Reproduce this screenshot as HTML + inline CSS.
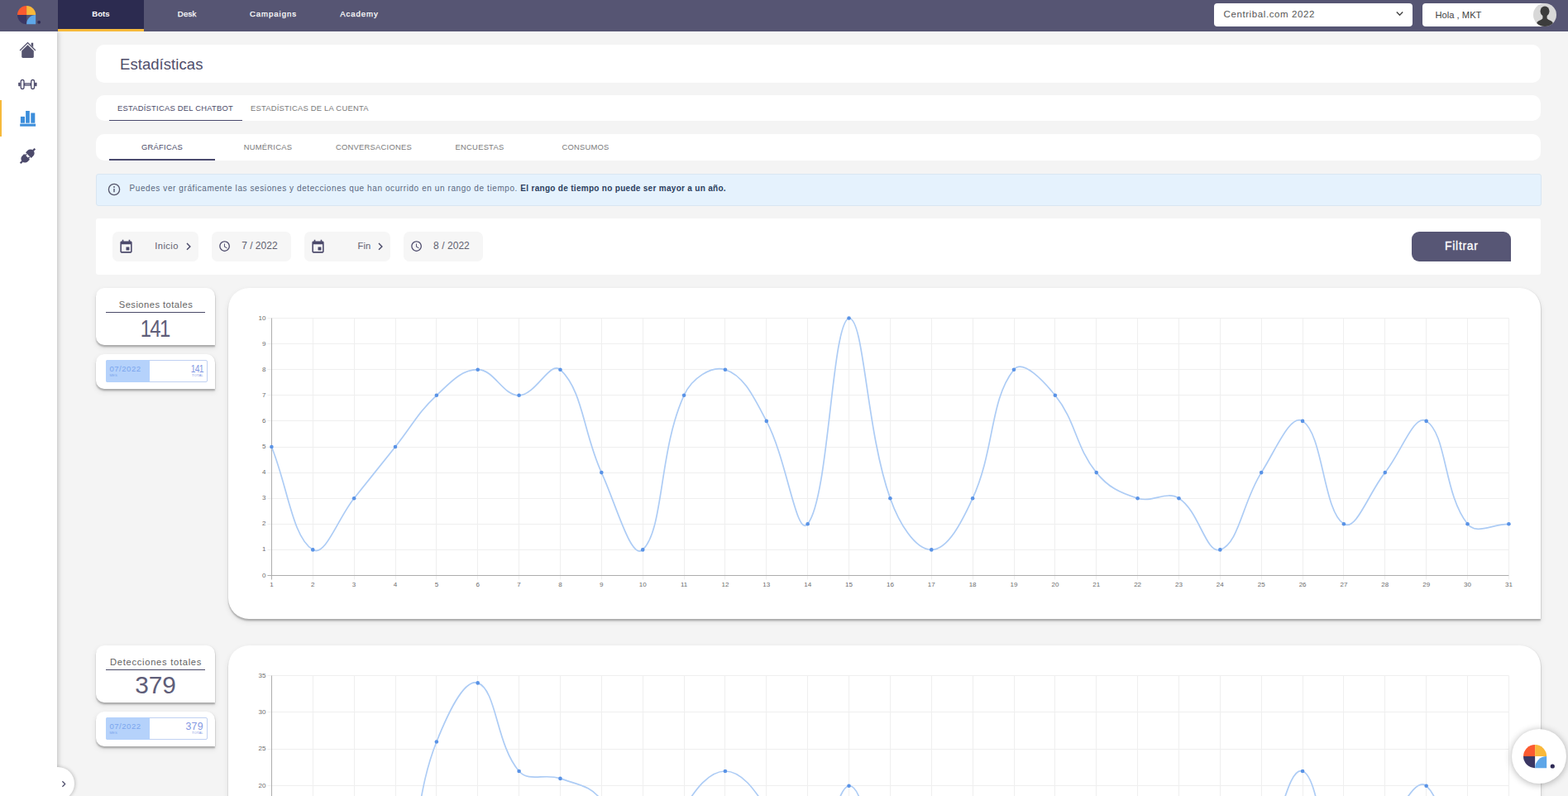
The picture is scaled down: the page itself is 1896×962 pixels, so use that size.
<!DOCTYPE html>
<html lang="es">
<head>
<meta charset="utf-8">
<title>Estadísticas</title>
<style>
*{box-sizing:border-box;margin:0;padding:0}
html,body{width:1896px;height:962px;overflow:hidden;background:#f4f4f4;font-family:"Liberation Sans",sans-serif;color:#4a4a68}
.abs{position:absolute}
#nav{position:absolute;left:0;top:0;width:1896px;height:38px;background:#565573}
#nav .on{position:absolute;left:70px;top:0;width:104px;height:38px;background:#2c2b50;border-bottom:3px solid #f6b93b}
#side{position:absolute;left:0;top:38px;width:69.3px;height:924px;background:#fff;box-shadow:1px 0 6px rgba(0,0,0,0.24)}
.card{position:absolute;background:#fff}
.t{position:absolute;white-space:nowrap;line-height:1}
.c{text-align:center}
.sel{position:absolute;top:4px;height:28px;background:#fff;border-radius:4px}
.fb{position:absolute;top:280px;height:36px;background:#f6f6f6;border-radius:7px}
.sh{box-shadow:0 2px 1.5px rgba(0,0,0,.16),0 3px 2px rgba(0,0,0,.1),0 3px 6px 1px rgba(0,0,0,.07),1px 0 1px rgba(0,0,0,.05)}
.up{font-size:9.4px;letter-spacing:0.24px}
.dim{color:#7a7a7a}
.ic{position:absolute;fill:#4c4a6b}
.nv{-webkit-text-stroke:0.25px #fff}
</style>
</head>
<body>
<!-- main cards -->
<div class="card" style="left:116px;top:54px;width:1747px;height:46px;border-radius:10px"></div>
<div class="t" style="left:145px;top:68.8px;font-size:18.5px;letter-spacing:0.06px;color:#4f4e6b">Estadísticas</div>

<div class="card" style="left:116px;top:115px;width:1747px;height:31px;border-radius:10px"></div>
<div class="abs" style="left:132px;top:144.5px;width:161px;height:1.5px;background:#4a4a6e"></div>
<div class="t up" style="left:142px;top:126px;color:#4a4a68">ESTADÍSTICAS DEL CHATBOT</div>
<div class="t up dim" style="left:303px;top:126px">ESTADÍSTICAS DE LA CUENTA</div>

<div class="card" style="left:116px;top:161.5px;width:1747px;height:32.5px;border-radius:10px"></div>
<div class="abs" style="left:132px;top:191.5px;width:128px;height:2.5px;background:#4a4a6e"></div>
<div class="t up c" style="left:132px;top:172.9px;width:128px;color:#4a4a68">GRÁFICAS</div>
<div class="t up c dim" style="left:260px;top:172.9px;width:128px">NUMÉRICAS</div>
<div class="t up c dim" style="left:388px;top:172.9px;width:128px">CONVERSACIONES</div>
<div class="t up c dim" style="left:516px;top:172.9px;width:128px">ENCUESTAS</div>
<div class="t up c dim" style="left:644px;top:172.9px;width:128px">CONSUMOS</div>

<!-- info banner -->
<div class="abs" style="left:116px;top:209.5px;width:1747.5px;height:39px;background:#e5f2fd;border:1px solid #d9e6f2;border-radius:3px"></div>
<svg class="abs" style="left:130px;top:221px" width="16" height="16" viewBox="0 0 16 16"><circle cx="8" cy="8" r="6.6" fill="none" stroke="#55556a" stroke-width="1.3"/><rect x="7.3" y="7" width="1.4" height="4.2" fill="#55556a"/><circle cx="8" cy="5" r="0.9" fill="#55556a"/></svg>
<div class="t" style="left:156.5px;top:223.4px;font-size:10px;letter-spacing:0.59px;color:#5a6880">Puedes ver gráficamente las sesiones y detecciones que han ocurrido en un rango de tiempo. <b style="color:#2c3e5e;letter-spacing:0.3px">El rango de tiempo no puede ser mayor a un año.</b></div>

<!-- filter card -->
<div class="card" style="left:116px;top:264px;width:1747px;height:68px;border-radius:3px"></div>
<div class="fb" style="left:136px;width:104px"></div>
<div class="fb" style="left:256px;width:96px"></div>
<div class="fb" style="left:368px;width:104px"></div>
<div class="fb" style="left:488px;width:96px"></div>
<svg class="ic" style="left:142.5px;top:289.2px" width="19" height="19" viewBox="0 0 24 24"><path d="M17 12h-5v5h5v-5zM16 1v2H8V1H6v2H5c-1.11 0-1.99.9-1.99 2L3 19c0 1.1.89 2 2 2h14c1.1 0 2-.9 2-2V5c0-1.1-.9-2-2-2h-1V1h-2zm3 18H5V8h14v11z"/></svg>
<svg class="ic" style="left:374.7px;top:289.2px" width="19" height="19" viewBox="0 0 24 24"><path d="M17 12h-5v5h5v-5zM16 1v2H8V1H6v2H5c-1.11 0-1.99.9-1.99 2L3 19c0 1.1.89 2 2 2h14c1.1 0 2-.9 2-2V5c0-1.1-.9-2-2-2h-1V1h-2zm3 18H5V8h14v11z"/></svg>
<svg class="ic" style="left:264px;top:290.4px" width="15.2" height="15.2" viewBox="0 0 24 24"><path d="M11.99 2C6.47 2 2 6.48 2 12s4.47 10 9.99 10C17.52 22 22 17.52 22 12S17.52 2 11.99 2zM12 20c-4.42 0-8-3.580-8-8s3.580-8 8-8 8 3.580 8 8-3.580 8-8 8zm.5-13H11v6l5.250 3.150.75-1.230-4.500-2.670z"/></svg>
<svg class="ic" style="left:496.1px;top:290.4px" width="15.2" height="15.2" viewBox="0 0 24 24"><path d="M11.99 2C6.47 2 2 6.48 2 12s4.47 10 9.99 10C17.52 22 22 17.520 22 12S17.520 2 11.990 2zM12 20c-4.42 0-8-3.580-8-8s3.580-8 8-8 8 3.580 8 8-3.580 8-8 8zm.5-13H11v6l5.250 3.150.75-1.230-4.500-2.670z"/></svg>
<svg class="abs" style="left:224px;top:292px" width="8" height="12" viewBox="0 0 8 12"><path d="M2 2L5.900 5.900 2 9.800" fill="none" stroke="#4a4a68" stroke-width="1.4"/></svg>
<svg class="abs" style="left:456px;top:292px" width="8" height="12" viewBox="0 0 8 12"><path d="M2 2L5.900 5.900 2 9.800" fill="none" stroke="#4a4a68" stroke-width="1.4"/></svg>
<div class="t" style="left:187.3px;top:291.5px;font-size:11.2px;letter-spacing:0.39px;color:#60606f">Inicio</div>
<div class="t" style="left:292.2px;top:291.1px;font-size:12px;color:#60606f">7 / 2022</div>
<div class="t" style="left:432.6px;top:291.5px;font-size:11.2px;color:#60606f">Fin</div>
<div class="t" style="left:524px;top:291.1px;font-size:12px;letter-spacing:0.06px;color:#60606f">8 / 2022</div>
<div class="abs" style="left:1707px;top:280px;width:120px;height:36px;background:#575675;border-radius:9px 9px 0 9px"></div>
<div class="t c" style="left:1707px;top:290.3px;width:120px;font-size:14px;letter-spacing:0.67px;text-indent:0.67px;color:#fff;-webkit-text-stroke:0.3px #fff">Filtrar</div>

<!-- stat cards -->
<div class="card sh" style="left:116px;top:348px;width:144px;height:69px;border-radius:10px 10px 0 10px"></div>
<div class="t c" style="left:116px;top:362.5px;width:145px;font-size:11.2px;letter-spacing:0.46px;color:#626262">Sesiones totales</div>
<div class="abs" style="left:128px;top:377px;width:120px;height:1px;background:#4a4a68"></div>
<div class="t c" style="left:116px;top:381.6px;width:144px;font-size:29.8px;color:#5f5e79;transform:scaleX(0.8);letter-spacing:-2px;text-indent:-2px" id="n141">141</div>
<div class="card sh" style="left:116px;top:427.5px;width:144px;height:42px;border-radius:10px 10px 0 10px"></div>
<div class="abs" style="left:128px;top:435px;width:123px;height:27px;border:1px solid #c0d1f2;background:#fff;border-radius:2px"></div>
<div class="abs" style="left:128px;top:435px;width:53px;height:27px;background:#b5d2fb;border-radius:2px 0 0 2px"></div>
<div class="t" style="left:132.4px;top:441.1px;font-size:9.6px;letter-spacing:0.5px;color:#7ba6ee">07/2022</div>
<div class="t" style="left:132.6px;top:451.7px;font-size:4.2px;color:#7ba6ee">MES</div>
<div class="t" style="right:1650.2px;top:439.8px;font-size:12.3px;color:#8398e2;letter-spacing:-0.9px;transform:scaleX(0.84);transform-origin:100% 50%" id="s141">141</div>
<div class="t" style="right:1650.3px;top:451.7px;font-size:4.2px;letter-spacing:0.1px;color:#8398e2">TOTAL</div>

<div class="card sh" style="left:116px;top:780px;width:144px;height:69px;border-radius:10px 10px 0 10px"></div>
<div class="t c" style="left:116px;top:794.5px;width:145px;font-size:11.2px;letter-spacing:0.71px;color:#626262">Detecciones totales</div>
<div class="abs" style="left:128px;top:809px;width:120px;height:1px;background:#4a4a68"></div>
<div class="t c" style="left:116px;top:813.4px;width:144px;font-size:29.8px;color:#5f5e79">379</div>
<div class="card sh" style="left:116px;top:859.5px;width:144px;height:42px;border-radius:10px 10px 0 10px"></div>
<div class="abs" style="left:128px;top:867px;width:123px;height:27px;border:1px solid #c0d1f2;background:#fff;border-radius:2px"></div>
<div class="abs" style="left:128px;top:867px;width:53px;height:27px;background:#b5d2fb;border-radius:2px 0 0 2px"></div>
<div class="t" style="left:132.4px;top:873.1px;font-size:9.6px;letter-spacing:0.5px;color:#7ba6ee">07/2022</div>
<div class="t" style="left:132.6px;top:883.7px;font-size:4.2px;color:#7ba6ee">MES</div>
<div class="t" style="right:1650.2px;top:871.8px;font-size:12.3px;letter-spacing:0.3px;color:#8398e2">379</div>
<div class="t" style="right:1650.3px;top:883.7px;font-size:4.2px;letter-spacing:0.1px;color:#8398e2">TOTAL</div>

<!-- chart cards -->
<div class="card sh" style="left:276px;top:348px;width:1587px;height:400px;border-radius:25px 25px 0 25px"></div>
<div class="card sh" style="left:276px;top:780px;width:1587px;height:400px;border-radius:25px 25px 0 25px"></div>
<svg class="abs" style="left:0;top:0" width="1896" height="962" viewBox="0 0 1896 962">
<path d="M378.5 384.5V700.5M428.5 384.5V700.5M478.5 384.5V700.5M527.5 384.5V700.5M577.5 384.5V700.5M627.5 384.5V700.5M677.5 384.5V700.5M727.5 384.5V700.5M777.5 384.5V700.5M827.5 384.5V700.5M876.5 384.5V700.5M926.5 384.5V700.5M976.5 384.5V700.5M1026.5 384.5V700.5M1076.5 384.5V700.5M1126.5 384.5V700.5M1176.5 384.5V700.5M1226.5 384.5V700.5M1275.5 384.5V700.5M1325.5 384.5V700.5M1375.5 384.5V700.5M1425.5 384.5V700.5M1475.5 384.5V700.5M1525.5 384.5V700.5M1575.5 384.5V700.5M1624.5 384.5V700.5M1674.5 384.5V700.5M1724.5 384.5V700.5M1774.5 384.5V700.5M1824.5 384.5V700.5M323.4 664.5H1824.4M323.4 633.5H1824.4M323.4 602.5H1824.4M323.4 571.5H1824.4M323.4 540.5H1824.4M323.4 508.5H1824.4M323.4 477.5H1824.4M323.4 446.5H1824.4M323.4 415.5H1824.4M323.4 384.5H1824.4" stroke="#efefef" stroke-width="1" fill="none"/>
<path d="M328.5 384.5V700.5M323.4 695.5H1824.4" stroke="#adadad" stroke-width="1" fill="none"/>
<g font-family="Liberation Sans, sans-serif" font-size="8" fill="#6c6c6c"><text x="321.4" y="697.5" text-anchor="end">0</text><text x="321.4" y="666.4" text-anchor="end">1</text><text x="321.4" y="635.3" text-anchor="end">2</text><text x="321.4" y="604.2" text-anchor="end">3</text><text x="321.4" y="573.1" text-anchor="end">4</text><text x="321.4" y="542.0" text-anchor="end">5</text><text x="321.4" y="510.9" text-anchor="end">6</text><text x="321.4" y="479.8" text-anchor="end">7</text><text x="321.4" y="448.7" text-anchor="end">8</text><text x="321.4" y="417.6" text-anchor="end">9</text><text x="321.4" y="386.5" text-anchor="end">10</text><text x="328.4" y="709.0" text-anchor="middle">1</text><text x="378.3" y="709.0" text-anchor="middle">2</text><text x="428.1" y="709.0" text-anchor="middle">3</text><text x="478.0" y="709.0" text-anchor="middle">4</text><text x="527.9" y="709.0" text-anchor="middle">5</text><text x="577.7" y="709.0" text-anchor="middle">6</text><text x="627.6" y="709.0" text-anchor="middle">7</text><text x="677.5" y="709.0" text-anchor="middle">8</text><text x="727.3" y="709.0" text-anchor="middle">9</text><text x="777.2" y="709.0" text-anchor="middle">10</text><text x="827.1" y="709.0" text-anchor="middle">11</text><text x="876.9" y="709.0" text-anchor="middle">12</text><text x="926.8" y="709.0" text-anchor="middle">13</text><text x="976.7" y="709.0" text-anchor="middle">14</text><text x="1026.5" y="709.0" text-anchor="middle">15</text><text x="1076.4" y="709.0" text-anchor="middle">16</text><text x="1126.3" y="709.0" text-anchor="middle">17</text><text x="1176.1" y="709.0" text-anchor="middle">18</text><text x="1226.0" y="709.0" text-anchor="middle">19</text><text x="1275.9" y="709.0" text-anchor="middle">20</text><text x="1325.7" y="709.0" text-anchor="middle">21</text><text x="1375.6" y="709.0" text-anchor="middle">22</text><text x="1425.5" y="709.0" text-anchor="middle">23</text><text x="1475.3" y="709.0" text-anchor="middle">24</text><text x="1525.2" y="709.0" text-anchor="middle">25</text><text x="1575.1" y="709.0" text-anchor="middle">26</text><text x="1624.9" y="709.0" text-anchor="middle">27</text><text x="1674.8" y="709.0" text-anchor="middle">28</text><text x="1724.7" y="709.0" text-anchor="middle">29</text><text x="1774.5" y="709.0" text-anchor="middle">30</text><text x="1824.4" y="709.0" text-anchor="middle">31</text></g>
<path d="M328.40 540.00C348.35 589.76 353.25 648.80 378.27 664.40C393.15 673.68 408.19 627.08 428.13 602.20C448.08 577.32 458.05 564.88 478.00 540.00C497.95 515.12 504.90 499.28 527.87 477.80C544.80 461.96 557.79 446.70 577.73 446.70C597.68 446.70 607.65 477.80 627.60 477.80C647.55 477.80 665.31 435.32 677.47 446.70C705.20 472.64 705.04 522.43 727.33 571.10C744.93 609.51 763.08 677.61 777.20 664.40C802.98 640.29 796.48 544.57 827.07 477.80C836.37 457.49 860.00 441.42 876.93 446.70C899.90 453.86 911.92 481.06 926.80 508.90C951.81 555.70 962.88 650.50 976.67 633.30C1002.77 600.74 1005.32 391.12 1026.53 384.50C1045.21 384.50 1047.00 519.69 1076.40 602.20C1086.89 631.65 1106.32 664.40 1126.27 664.40C1146.21 664.40 1163.05 630.77 1176.13 602.20C1202.94 543.69 1196.66 483.29 1226.00 446.70C1236.56 433.53 1261.62 460.03 1275.87 477.80C1301.51 509.79 1300.09 539.11 1325.73 571.10C1339.98 588.87 1354.02 595.47 1375.60 602.20C1393.91 607.91 1410.12 592.63 1425.47 602.20C1450.01 617.51 1458.19 669.75 1475.33 664.40C1498.08 657.31 1502.45 606.57 1525.20 571.10C1542.34 544.37 1560.19 499.62 1575.07 508.90C1600.08 524.50 1599.92 617.70 1624.93 633.30C1639.81 642.58 1654.85 595.98 1674.80 571.10C1694.75 546.22 1709.79 499.62 1724.67 508.90C1749.68 524.50 1745.46 597.03 1774.53 633.30C1785.35 646.79 1804.45 633.30 1824.40 633.30" stroke="#adccf5" stroke-width="1.7" fill="none" stroke-linecap="butt"/>
<g fill="#5a93e6"><circle cx="328.40" cy="540.00" r="2.3"/><circle cx="378.27" cy="664.40" r="2.3"/><circle cx="428.13" cy="602.20" r="2.3"/><circle cx="478.00" cy="540.00" r="2.3"/><circle cx="527.87" cy="477.80" r="2.3"/><circle cx="577.73" cy="446.70" r="2.3"/><circle cx="627.60" cy="477.80" r="2.3"/><circle cx="677.47" cy="446.70" r="2.3"/><circle cx="727.33" cy="571.10" r="2.3"/><circle cx="777.20" cy="664.40" r="2.3"/><circle cx="827.07" cy="477.80" r="2.3"/><circle cx="876.93" cy="446.70" r="2.3"/><circle cx="926.80" cy="508.90" r="2.3"/><circle cx="976.67" cy="633.30" r="2.3"/><circle cx="1026.53" cy="384.50" r="2.3"/><circle cx="1076.40" cy="602.20" r="2.3"/><circle cx="1126.27" cy="664.40" r="2.3"/><circle cx="1176.13" cy="602.20" r="2.3"/><circle cx="1226.00" cy="446.70" r="2.3"/><circle cx="1275.87" cy="477.80" r="2.3"/><circle cx="1325.73" cy="571.10" r="2.3"/><circle cx="1375.60" cy="602.20" r="2.3"/><circle cx="1425.47" cy="602.20" r="2.3"/><circle cx="1475.33" cy="664.40" r="2.3"/><circle cx="1525.20" cy="571.10" r="2.3"/><circle cx="1575.07" cy="508.90" r="2.3"/><circle cx="1624.93" cy="633.30" r="2.3"/><circle cx="1674.80" cy="571.10" r="2.3"/><circle cx="1724.67" cy="508.90" r="2.3"/><circle cx="1774.53" cy="633.30" r="2.3"/><circle cx="1824.40" cy="633.30" r="2.3"/></g>
<path d="M378.5 816.5V1132.5M428.5 816.5V1132.5M478.5 816.5V1132.5M527.5 816.5V1132.5M577.5 816.5V1132.5M627.5 816.5V1132.5M677.5 816.5V1132.5M727.5 816.5V1132.5M777.5 816.5V1132.5M827.5 816.5V1132.5M876.5 816.5V1132.5M926.5 816.5V1132.5M976.5 816.5V1132.5M1026.5 816.5V1132.5M1076.5 816.5V1132.5M1126.5 816.5V1132.5M1176.5 816.5V1132.5M1226.5 816.5V1132.5M1275.5 816.5V1132.5M1325.5 816.5V1132.5M1375.5 816.5V1132.5M1425.5 816.5V1132.5M1475.5 816.5V1132.5M1525.5 816.5V1132.5M1575.5 816.5V1132.5M1624.5 816.5V1132.5M1674.5 816.5V1132.5M1724.5 816.5V1132.5M1774.5 816.5V1132.5M1824.5 816.5V1132.5M323.4 1083.5H1824.4M323.4 1038.5H1824.4M323.4 994.5H1824.4M323.4 949.5H1824.4M323.4 905.5H1824.4M323.4 860.5H1824.4M323.4 816.5H1824.4" stroke="#efefef" stroke-width="1" fill="none"/>
<path d="M328.5 816.5V1132.5M323.4 1127.5H1824.4" stroke="#adadad" stroke-width="1" fill="none"/>
<g font-family="Liberation Sans, sans-serif" font-size="8" fill="#6c6c6c"><text x="321.4" y="1129.5" text-anchor="end">0</text><text x="321.4" y="1085.1" text-anchor="end">5</text><text x="321.4" y="1040.6" text-anchor="end">10</text><text x="321.4" y="996.2" text-anchor="end">15</text><text x="321.4" y="951.8" text-anchor="end">20</text><text x="321.4" y="907.4" text-anchor="end">25</text><text x="321.4" y="862.9" text-anchor="end">30</text><text x="321.4" y="818.5" text-anchor="end">35</text><text x="328.4" y="1141.0" text-anchor="middle">1</text><text x="378.3" y="1141.0" text-anchor="middle">2</text><text x="428.1" y="1141.0" text-anchor="middle">3</text><text x="478.0" y="1141.0" text-anchor="middle">4</text><text x="527.9" y="1141.0" text-anchor="middle">5</text><text x="577.7" y="1141.0" text-anchor="middle">6</text><text x="627.6" y="1141.0" text-anchor="middle">7</text><text x="677.5" y="1141.0" text-anchor="middle">8</text><text x="727.3" y="1141.0" text-anchor="middle">9</text><text x="777.2" y="1141.0" text-anchor="middle">10</text><text x="827.1" y="1141.0" text-anchor="middle">11</text><text x="876.9" y="1141.0" text-anchor="middle">12</text><text x="926.8" y="1141.0" text-anchor="middle">13</text><text x="976.7" y="1141.0" text-anchor="middle">14</text><text x="1026.5" y="1141.0" text-anchor="middle">15</text><text x="1076.4" y="1141.0" text-anchor="middle">16</text><text x="1126.3" y="1141.0" text-anchor="middle">17</text><text x="1176.1" y="1141.0" text-anchor="middle">18</text><text x="1226.0" y="1141.0" text-anchor="middle">19</text><text x="1275.9" y="1141.0" text-anchor="middle">20</text><text x="1325.7" y="1141.0" text-anchor="middle">21</text><text x="1375.6" y="1141.0" text-anchor="middle">22</text><text x="1425.5" y="1141.0" text-anchor="middle">23</text><text x="1475.3" y="1141.0" text-anchor="middle">24</text><text x="1525.2" y="1141.0" text-anchor="middle">25</text><text x="1575.1" y="1141.0" text-anchor="middle">26</text><text x="1624.9" y="1141.0" text-anchor="middle">27</text><text x="1674.8" y="1141.0" text-anchor="middle">28</text><text x="1724.7" y="1141.0" text-anchor="middle">29</text><text x="1774.5" y="1141.0" text-anchor="middle">30</text><text x="1824.4" y="1141.0" text-anchor="middle">31</text></g>
<path d="M328.40 1074.19C348.35 1084.85 359.98 1104.10 378.27 1100.84C399.87 1096.99 405.88 1062.36 428.13 1056.41C445.77 1051.70 469.11 1088.45 478.00 1074.19C509.00 1024.47 500.74 964.15 527.87 896.47C540.63 864.63 560.80 819.35 577.73 825.39C600.69 833.57 599.71 899.71 627.60 932.01C639.60 945.92 658.62 934.18 677.47 940.90C698.51 948.40 715.50 949.63 727.33 967.56C755.39 1010.05 756.62 1090.12 777.20 1091.96C796.52 1093.68 801.01 1018.24 827.07 976.44C840.90 954.26 856.99 932.01 876.93 932.01C896.88 932.01 912.36 954.57 926.80 976.44C952.25 1014.99 958.61 1087.90 976.67 1083.07C998.50 1077.24 1005.99 951.62 1026.53 949.79C1045.88 948.06 1048.34 1031.69 1076.40 1074.19C1088.24 1092.11 1107.11 1102.55 1126.27 1100.84C1147.01 1098.99 1159.63 1082.94 1176.13 1065.30C1199.53 1040.29 1200.80 1009.93 1226.00 994.21C1240.70 985.05 1258.66 993.90 1275.87 1003.10C1298.55 1015.23 1303.48 1033.65 1325.73 1047.53C1343.37 1058.53 1355.21 1059.85 1375.60 1065.30C1395.11 1070.51 1407.41 1066.14 1425.47 1074.19C1447.30 1083.91 1458.83 1115.61 1475.33 1109.73C1498.73 1101.39 1508.26 1068.82 1525.20 1038.64C1548.16 997.73 1557.57 925.78 1575.07 932.01C1597.46 940.00 1599.63 1056.15 1624.93 1074.19C1639.52 1084.58 1653.13 1030.13 1674.80 1003.10C1693.02 980.37 1711.65 938.19 1724.67 949.79C1751.54 973.73 1744.68 1052.06 1774.53 1091.96C1784.57 1105.37 1804.45 1086.63 1824.40 1083.07" stroke="#adccf5" stroke-width="1.7" fill="none" stroke-linecap="butt"/>
<g fill="#5a93e6"><circle cx="328.40" cy="1074.19" r="2.3"/><circle cx="378.27" cy="1100.84" r="2.3"/><circle cx="428.13" cy="1056.41" r="2.3"/><circle cx="478.00" cy="1074.19" r="2.3"/><circle cx="527.87" cy="896.47" r="2.3"/><circle cx="577.73" cy="825.39" r="2.3"/><circle cx="627.60" cy="932.01" r="2.3"/><circle cx="677.47" cy="940.90" r="2.3"/><circle cx="727.33" cy="967.56" r="2.3"/><circle cx="777.20" cy="1091.96" r="2.3"/><circle cx="827.07" cy="976.44" r="2.3"/><circle cx="876.93" cy="932.01" r="2.3"/><circle cx="926.80" cy="976.44" r="2.3"/><circle cx="976.67" cy="1083.07" r="2.3"/><circle cx="1026.53" cy="949.79" r="2.3"/><circle cx="1076.40" cy="1074.19" r="2.3"/><circle cx="1126.27" cy="1100.84" r="2.3"/><circle cx="1176.13" cy="1065.30" r="2.3"/><circle cx="1226.00" cy="994.21" r="2.3"/><circle cx="1275.87" cy="1003.10" r="2.3"/><circle cx="1325.73" cy="1047.53" r="2.3"/><circle cx="1375.60" cy="1065.30" r="2.3"/><circle cx="1425.47" cy="1074.19" r="2.3"/><circle cx="1475.33" cy="1109.73" r="2.3"/><circle cx="1525.20" cy="1038.64" r="2.3"/><circle cx="1575.07" cy="932.01" r="2.3"/><circle cx="1624.93" cy="1074.19" r="2.3"/><circle cx="1674.80" cy="1003.10" r="2.3"/><circle cx="1724.67" cy="949.79" r="2.3"/><circle cx="1774.53" cy="1091.96" r="2.3"/><circle cx="1824.40" cy="1083.07" r="2.3"/></g>
</svg>

<!-- side + nav -->
<div id="side"></div>

<div class="abs" style="left:0;top:121px;width:2px;height:44px;background:#f6b93b"></div>
<svg class="abs" style="left:23px;top:50px" width="21" height="21" viewBox="0 0 21 21"><g fill="#55546f"><path d="M10.500 0.7L0.6 10.600 1.500 11.500 10.500 2.500 19.500 11.500 20.400 10.600Z"/><path d="M10.500 4.300L3.200 11.600V18.600Q3.200 20 4.600 20H16.400Q17.800 20 17.800 18.600V11.600Z"/><path d="M14.700 1.800H17.200V7.200L14.700 4.700Z"/></g></svg>
<svg class="abs" style="left:21px;top:94px" width="25" height="16" viewBox="0 0 25 16"><g fill="none" stroke="#4c4a6b" stroke-width="1.300"><rect x="4.200" y="2.500" width="3.800" height="11" rx="1.900"/><rect x="16.700" y="2.500" width="3.800" height="11" rx="1.900"/><rect x="8.600" y="7" width="7.500" height="2"/></g><g fill="#4c4a6b"><rect x="1.200" y="5.700" width="2.400" height="4.600" rx="0.800"/><rect x="21.100" y="5.700" width="2.400" height="4.600" rx="0.800"/></g></svg>
<svg class="abs" style="left:24px;top:133px" width="20" height="21" viewBox="0 0 20 21"><g fill="#3c8edb"><rect x="0.900" y="7.900" width="5.100" height="7.800"/><rect x="7.100" y="1" width="4.700" height="14.700"/><rect x="13.300" y="3.500" width="5" height="12.200"/><rect x="0.200" y="16.600" width="18.900" height="3.100"/></g></svg>
<svg class="abs" style="left:20px;top:175px" width="27" height="27" viewBox="-13.5 -13.5 27 27"><g transform="rotate(-45)" fill="#4c4a6b"><path d="M1.300 -4.800H4.700A4.800 4.800 0 0 1 4.700 4.800H1.300Z"/><rect x="9" y="-1.100" width="3.500" height="2.200"/><path d="M-1.300 -4.800H-4.700A4.800 4.800 0 0 0 -4.700 4.800H-1.300Z"/><rect x="-12.500" y="-1.100" width="3.500" height="2.200"/><rect x="-1.600" y="-3.300" width="2.200" height="1.500"/><rect x="-1.600" y="1.800" width="2.200" height="1.500"/></g></svg>
<div class="abs" style="left:50px;top:927px;width:40px;height:40px;border-radius:20px;background:#fff;box-shadow:1px 0 4px rgba(0,0,0,0.22)"></div>
<div class="abs" style="left:40px;top:924px;width:29.3px;height:38px;background:#fff"></div>
<svg class="abs" style="left:73px;top:942px" width="8" height="11" viewBox="0 0 8 11"><path d="M2.400 2.300L5.700 5.500 2.400 8.700" fill="none" stroke="#4a4a68" stroke-width="1.200"/></svg>

<div id="nav">
<div class="on"></div>
<div class="t c" style="left:70px;top:12.4px;width:104px;font-size:9.6px;font-weight:bold;color:#fff">Bots</div>
<div class="t c nv" style="left:174px;top:12.4px;width:104px;font-size:9.6px;letter-spacing:0.18px;text-indent:0.18px;color:#fff">Desk</div>
<div class="t c nv" style="left:278px;top:12.4px;width:104px;font-size:9.6px;letter-spacing:0.93px;text-indent:0.93px;color:#fff">Campaigns</div>
<div class="t c nv" style="left:382px;top:12.4px;width:104px;font-size:9.6px;letter-spacing:0.91px;text-indent:0.91px;color:#fff">Academy</div>
<div class="sel" style="left:1468px;width:240px"></div>
<div class="t" style="left:1479.5px;top:11.7px;font-size:11.5px;letter-spacing:0.6px;color:#555">Centribal.com 2022</div>
<svg class="abs" style="left:1686px;top:11px" width="13" height="11" viewBox="0 0 13 11"><path d="M2.8 3.600L6.5 7.3 10.200 3.600" fill="none" stroke="#444" stroke-width="1.400"/></svg>
<div class="sel" style="left:1720px;width:150px"></div>
<div class="t" style="left:1735.5px;top:13.3px;font-size:11.2px;color:#444">Hola , MKT</div>
<svg class="abs" style="left:1854px;top:4px" width="28" height="28" viewBox="0 0 28 28"><defs><clipPath id="av"><circle cx="14" cy="14" r="14"/></clipPath></defs><circle cx="14" cy="14" r="14" fill="#d8d8d8"/><g clip-path="url(#av)" fill="#3c3c3c"><ellipse cx="14" cy="9.600" rx="5.500" ry="6.200"/><path d="M11.400 13H16.600V18.200Q17.500 19.800 21.500 21.200Q24 22.200 24 25V29H4V25Q4 22.200 6.500 21.200Q10.500 19.800 11.400 18.200Z"/></g></svg><svg class="abs" style="left:20.4px;top:6.1px" width="36.2" height="24.2" viewBox="-12.10 -12.10 36.20 24.20"><path d="M0 0H-11.10A11.10 11.10 0 0 1 0 -11.10Z" fill="#fb5a30"/><path d="M0 0V-11.10A11.10 11.10 0 0 1 11.10 0Z" fill="#f9b83a"/><path d="M0 0V11.10A11.10 11.10 0 0 1 -11.10 0Z" fill="#3b3763"/><path d="M11.10 11.10H0A11.10 11.10 0 0 1 11.10 0Z" fill="#5ea6e8"/><circle cx="15.10" cy="8.70" r="1.90" fill="#2e2a55"/></svg>
</div>
<div class="abs" style="left:1828px;top:881px;width:66px;height:66px;border-radius:33px;background:#fff;box-shadow:0 1px 8px rgba(0,0,0,0.3)"></div><svg class="abs" style="left:1841.1px;top:899.0px" width="42.2" height="30.2" viewBox="-15.10 -15.10 42.20 30.20"><path d="M0 0H-14.10A14.10 14.10 0 0 1 0 -14.10Z" fill="#fb5a30"/><path d="M0 0V-14.10A14.10 14.10 0 0 1 14.10 0Z" fill="#f9b83a"/><path d="M0 0V14.10A14.10 14.10 0 0 1 -14.10 0Z" fill="#3b3763"/><path d="M14.10 14.10H0A14.10 14.10 0 0 1 14.10 0Z" fill="#5ea6e8"/><circle cx="21.20" cy="11.90" r="2.60" fill="#2e2a55"/></svg>
</body>
</html>
